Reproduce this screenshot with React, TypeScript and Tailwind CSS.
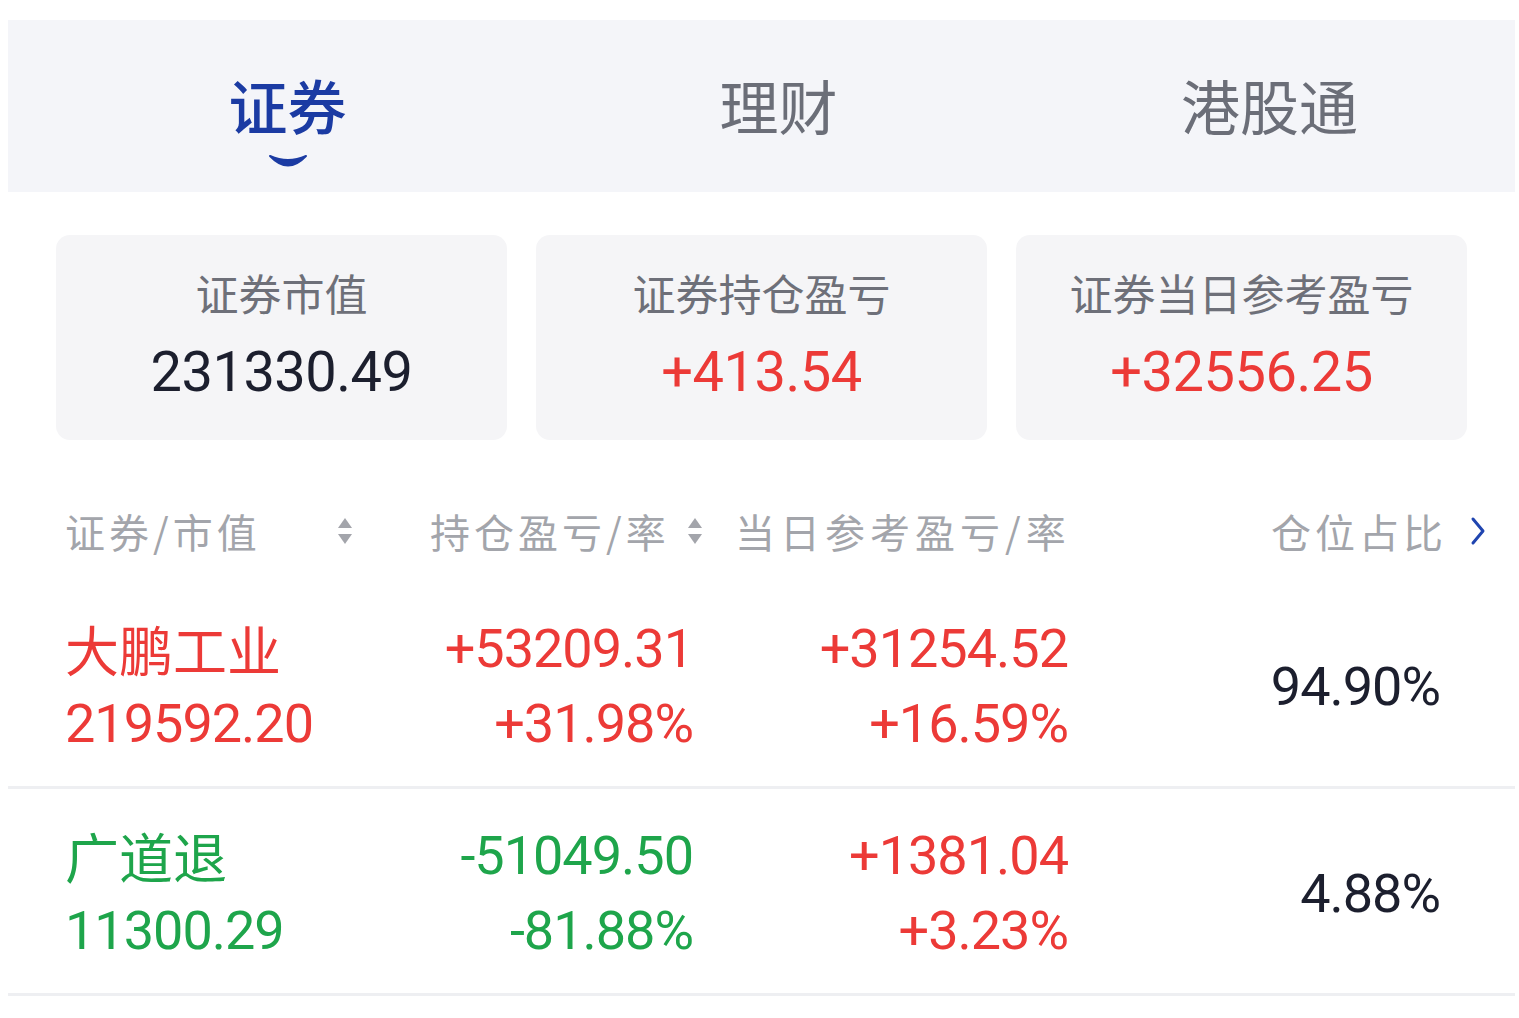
import { useState } from 'react'

interface Holding {
  name: string
  value: string
  pnl: string
  pnlRate: string
  today: string
  todayRate: string
  ratio: string
  up: boolean
}

const TABS = ['证券', '理财', '港股通']

const SUMMARY = [
  { label: '证券市值', value: '231330.49', tone: 'text-[#1c1f2e]' },
  { label: '证券持仓盈亏', value: '+413.54', tone: 'text-[#ec3a37]' },
  { label: '证券当日参考盈亏', value: '+32556.25', tone: 'text-[#ec3a37]' },
]

const HOLDINGS: Holding[] = [
  { name: '大鹏工业', value: '219592.20', pnl: '+53209.31', pnlRate: '+31.98%', today: '+31254.52', todayRate: '+16.59%', ratio: '94.90%', up: true },
  { name: '广道退', value: '11300.29', pnl: '-51049.50', pnlRate: '-81.88%', today: '+1381.04', todayRate: '+3.23%', ratio: '4.88%', up: false },
]

const CJK = "font-['Noto_Sans_CJK_SC',sans-serif]"
const NUM = "font-['Roboto','Noto_Sans_CJK_SC',sans-serif]"

function SortIcon() {
  return (
    <svg width="16" height="30" viewBox="0 0 16 30" className="shrink-0">
      <path d="M8 2 L15 12 L1 12 Z" fill="#a3a5ab" />
      <path d="M8 28 L15 18 L1 18 Z" fill="#a3a5ab" />
    </svg>
  )
}

export default function App() {
  const [tab, setTab] = useState(0)

  return (
    <div className={`min-h-screen bg-white ${CJK}`}>
      {/* Tabs */}
      <div className="ml-[8px] mr-[4px] mt-[20px] h-[172px] bg-[#f4f5f9] grid grid-cols-3 pl-[34px]">
        {TABS.map((t, i) => (
          <button key={t} onClick={() => setTab(i)} className="flex flex-col items-center pt-[55px]">
            <span
              className={`text-[59px] leading-[59px] ${
                tab === i ? 'text-[#1b3ba3] font-medium' : 'text-[#6b6e78]'
              }`}
            >
              {t}
            </span>
            {tab === i && (
              <svg width="40" height="16" viewBox="0 0 40 16" className="mt-[19px]">
                <path d="M2 3 Q20 22 38 3 Q20 11 2 3 Z" fill="#1b3ba3" stroke="#1b3ba3" strokeWidth="2" strokeLinejoin="round" />
              </svg>
            )}
          </button>
        ))}
      </div>

      {/* Summary cards */}
      <div className="ml-[56px] mr-[52px] mt-[43px] grid grid-cols-3 gap-[29px]">
        {SUMMARY.map(s => (
          <div key={s.label} className="h-[205px] rounded-[14px] bg-[#f5f5f7] flex flex-col items-center pt-[35px]">
            <div className="text-[43px] leading-[44px] text-[#6e7079]">{s.label}</div>
            <div className={`mt-[30px] text-[56px] leading-[56px] tracking-[-0.5px] ${NUM} ${s.tone}`}>{s.value}</div>
          </div>
        ))}
      </div>

      {/* Table header */}
      <div className="ml-[8px] mr-[4px] mt-[40px] h-[102px] pl-[57px] flex items-center text-[40px] tracking-[4px] text-[#a3a5ab]">
        <div className="w-[288px] flex items-center justify-between">
          <span>证券/市值</span>
          <SortIcon />
        </div>
        <div className="ml-[77px] w-[273px] flex items-center justify-between">
          <span>持仓盈亏/率</span>
          <SortIcon />
        </div>
        <div className="ml-[32px] tracking-[5px]">当日参考盈亏/率</div>
        <div className="ml-auto mr-[28px] flex items-center gap-[22px]">
          <span>仓位占比</span>
          <svg width="18" height="30" viewBox="0 0 18 30">
            <path d="M4 3 L14 15 L4 27" fill="none" stroke="#2045b0" strokeWidth="3" strokeLinecap="round" strokeLinejoin="round" />
          </svg>
        </div>
      </div>

      {/* Rows */}
      {HOLDINGS.map(h => {
        const own = h.up ? 'text-[#ec3a37]' : 'text-[#1ea54b]'
        const pnl = h.pnl.startsWith('-') ? 'text-[#1ea54b]' : 'text-[#ec3a37]'
        const today = h.today.startsWith('-') ? 'text-[#1ea54b]' : 'text-[#ec3a37]'
        return (
          <div key={h.name} className="ml-[8px] mr-[4px] h-[207px] pt-[4px] pl-[57px] flex items-center border-b-[3px] border-[#eeeff2]">
            <div className={`w-[345px] leading-[75px] ${own}`}>
              <div className="text-[54px]">{h.name}</div>
              <div className={`text-[54px] tracking-[-1px] ${NUM}`}>{h.value}</div>
            </div>
            <div className={`w-[283px] text-right text-[54px] leading-[75px] tracking-[-1px] ${NUM} ${pnl}`}>
              <div>{h.pnl}</div>
              <div>{h.pnlRate}</div>
            </div>
            <div className={`w-[375px] text-right text-[54px] leading-[75px] tracking-[-1px] ${NUM} ${today}`}>
              <div>{h.today}</div>
              <div>{h.todayRate}</div>
            </div>
            <div className={`w-[372px] text-right text-[54px] tracking-[-1px] text-[#1c1f2e] ${NUM}`}>{h.ratio}</div>
          </div>
        )
      })}
    </div>
  )
}
